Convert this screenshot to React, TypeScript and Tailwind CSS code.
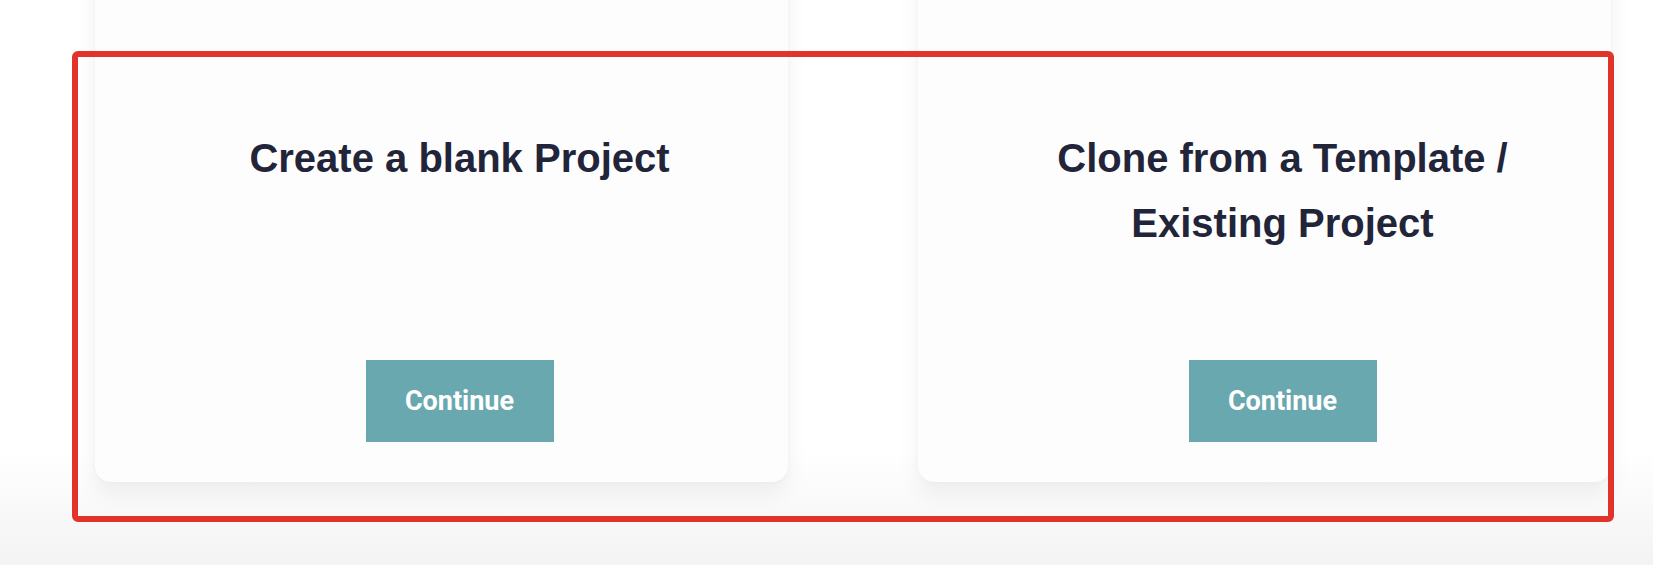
import React from 'react';

type Option = {
  id: string;
  lines: string[];
};

const options: Option[] = [
  { id: 'blank', lines: ['Create a blank Project'] },
  { id: 'clone', lines: ['Clone from a Template /', 'Existing Project'] },
];

const OptionCard: React.FC<{ option: Option }> = ({ option }) => {
  return (
    <div className="flex h-[522px] w-[693px] shrink-0 flex-col items-center rounded-2xl bg-[#fdfdfd] pb-[40px] pl-[36px] pt-[166px] shadow-[0_12px_22px_rgba(0,0,0,0.06),0_0_5px_rgba(0,0,0,0.035)]">
      <h2 className="text-center text-[40px] font-bold leading-[65px] text-[#22253a]">
        {option.lines.map(line => (
          <div key={line}>{line}</div>
        ))}
      </h2>
      <button
        type="button"
        className="mt-auto flex h-[82px] w-[188px] items-center justify-center bg-[#6aa8b0] font-['Roboto',sans-serif] text-[27px] font-bold text-white"
      >
        Continue
      </button>
    </div>
  );
};

export default function App() {
  return (
    <div className="relative h-[565px] w-full overflow-hidden bg-linear-to-b from-white from-80% to-[#f3f3f3] font-['Liberation_Sans',Arial,sans-serif]">
      <div className="-mt-[40px] flex gap-[130px] pl-[95px]">
        {options.map(opt => (
          <OptionCard key={opt.id} option={opt} />
        ))}
      </div>

      {/* annotation box drawn over the cards */}
      <div className="pointer-events-none absolute left-[72px] top-[51px] h-[471px] w-[1542px] rounded-[6px] border-[6px] border-[#e2332a]" />
    </div>
  );
}
